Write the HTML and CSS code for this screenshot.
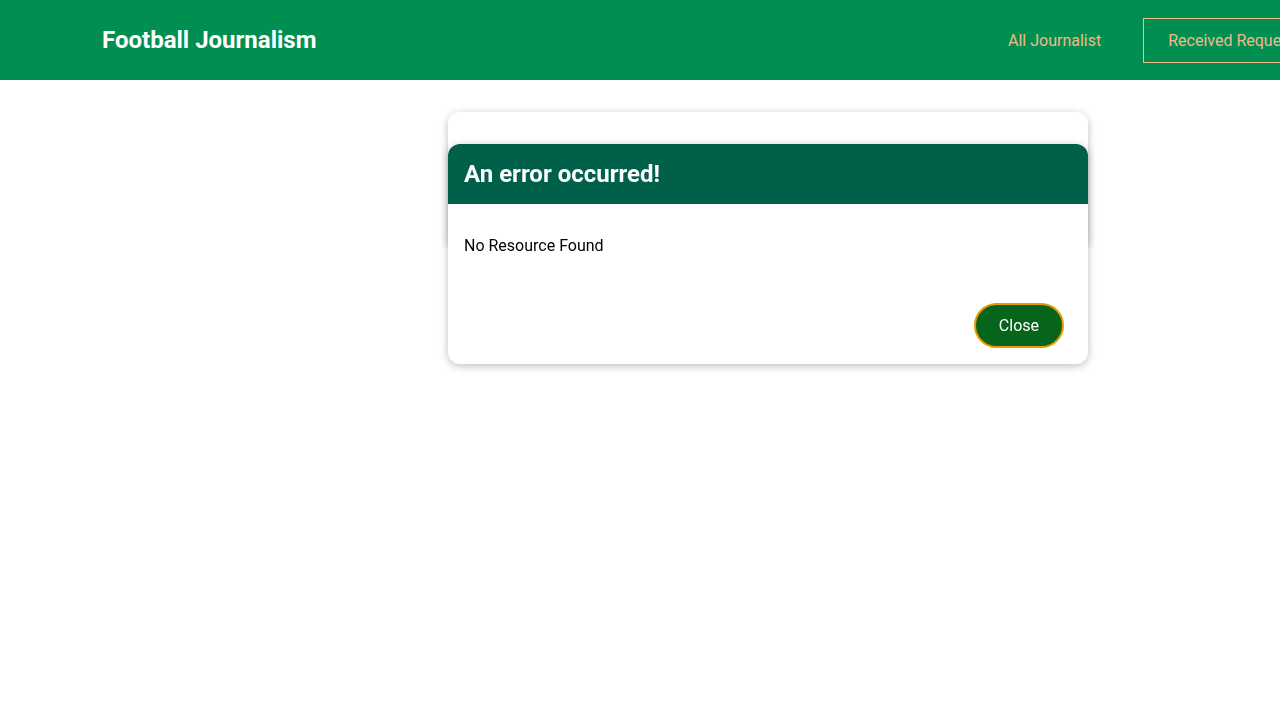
FILE: index.html
```html
<!DOCTYPE html>
<html lang="en">
<head>
<meta charset="utf-8">
<title>Football Journalism</title>
<link rel="stylesheet" href="styles.css">
</head>
<body>
<header class="header">
  <h1 class="logo">Football Journalism</h1>
  <nav class="nav">
    <ul class="nav-list">
      <li><a class="nav-link" href="#">All Journalist</a></li>
      <li><a class="nav-link nav-link--active" href="#">Received Requests</a></li>
    </ul>
  </nav>
</header>
<main class="main">
  <section class="card"></section>
</main>
<dialog class="modal" open>
  <header class="modal-header">
    <h2 class="modal-title">An error occurred!</h2>
  </header>
  <section class="modal-body">
    <p class="modal-text">No Resource Found</p>
  </section>
  <menu class="modal-actions">
    <button class="btn">Close</button>
  </menu>
</dialog>
</body>
</html>
```

FILE: styles.css
```css
* { box-sizing: border-box; }
html, body { overflow: hidden; }
body {
  margin: 0;
  font-family: Roboto, "Noto Sans", sans-serif;
  background: #fff;
  color: #000;
}
.header {
  height: 80px;
  background: #008f51;
  display: grid;
  grid-template-columns: 881px max-content;
  align-items: center;
  padding-left: 102px;
  overflow: hidden;
}
.logo {
  margin: 0;
  font-size: 24px;
  font-weight: 700;
  color: #fff;
}
.nav-list {
  list-style: none;
  margin: 0;
  padding: 0;
  display: flex;
  gap: 17px;
  align-items: center;
}
.nav-link {
  display: block;
  padding: 12px 24px;
  border: 1px solid transparent;
  color: #f1b98c;
  text-decoration: none;
  font-size: 16px;
  white-space: nowrap;
}
.nav-link--active {
  border-color: #f1b98c;
}
.main {
  padding: 32px 0 0 448px;
}
.card {
  width: 640px;
  height: 137px;
  background: #fff;
  border-radius: 12px;
  box-shadow: 0 2px 8px rgba(0,0,0,0.26);
}
.modal {
  position: fixed;
  top: 144px;
  left: 448px;
  width: 640px;
  margin: 0;
  padding: 0;
  border: none;
  border-radius: 12px;
  background: #fff;
  box-shadow: 0 2px 8px rgba(0,0,0,0.26);
  overflow: hidden;
  color: #000;
}
.modal-header {
  background: #00604a;
  padding: 16px;
}
.modal-title {
  margin: 0;
  color: #fff;
  font-size: 24px;
  font-weight: 700;
  line-height: 28px;
}
.modal-body {
  padding: 16px;
}
.modal-text {
  margin: 16px 0;
  font-size: 16px;
}
.modal-actions {
  margin: 0;
  padding: 16px 24px 16px 16px;
  display: flex;
  justify-content: flex-end;
}
.btn {
  font-family: inherit;
  font-size: 16px;
  color: #fff;
  background: #06651a;
  border: 2px solid #e89a00;
  border-radius: 30px;
  padding: 11px 23px;
  cursor: pointer;
}
```
